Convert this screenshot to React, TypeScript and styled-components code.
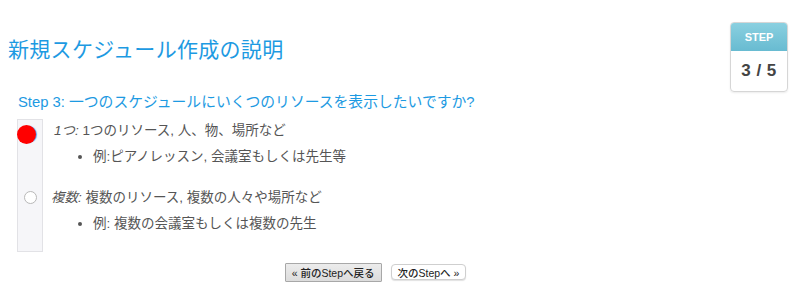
import React, {useState} from 'react';
import styled, {createGlobalStyle} from 'styled-components';

const GlobalStyle = createGlobalStyle`
  html, body {
    margin: 0;
    padding: 0;
    background: #ffffff;
  }
  body {
    font-family: "Liberation Sans", "Noto Sans CJK JP", sans-serif;
    color: #555555;
  }
`;

const Page = styled.div`
  width: 800px;
  height: 301px;
  box-sizing: border-box;
  padding: 22px 12px 0 8px;
`;

const Header = styled.div`
  display: flex;
  justify-content: space-between;
  align-items: flex-start;
`;

const Title = styled.h1`
  margin: 11px 0 0 0;
  font-size: 21px;
  font-weight: normal;
  color: #1d9ae2;
  letter-spacing: 0.3px;
`;

const StepBox = styled.div`
  width: 56px;
  height: 68px;
  border: 1px solid #d6d6d6;
  border-radius: 4px;
  overflow: hidden;
  display: flex;
  flex-direction: column;
  box-shadow: 0 1px 2px rgba(0, 0, 0, .08);
`;

const StepHead = styled.div`
  height: 28px;
  display: flex;
  align-items: center;
  justify-content: center;
  background: linear-gradient(#8ad0e0, #68bbd1);
  color: #ffffff;
  font-size: 11px;
  font-weight: bold;
`;

const StepCount = styled.div`
  flex: 1;
  display: flex;
  align-items: center;
  justify-content: center;
  color: #444444;
  font-size: 17px;
  font-weight: bold;
  letter-spacing: 0.5px;
`;

const Question = styled.h2`
  margin: -2px 0 0 10px;
  font-size: 14.8px;
  font-weight: normal;
  color: #1d9ae2;
`;

const Options = styled.div`
  display: flex;
  margin: 8px 0 0 9px;
`;

const RadioStrip = styled.div`
  width: 24px;
  height: 131px;
  background: #f6f6f9;
  border: 1px solid #e2e2e6;
  position: relative;
`;

type RadioPropsType = {
    $checked: boolean
    $top: number
}

const Radio = styled.span<RadioPropsType>`
  position: absolute;
  box-sizing: border-box;
  border-radius: 50%;
  cursor: pointer;
  ${props => props.$checked ? `
    left: -1px;
    top: ${props.$top}px;
    width: 19px;
    height: 19px;
    background: #ff0000;
    box-shadow: 2px 0 1px -1px #4aa0f5;
  ` : `
    left: 6px;
    top: ${props.$top}px;
    width: 13px;
    height: 13px;
    background: #ffffff;
    border: 1px solid #b8b8b8;
  `}
`;

const OptionList = styled.div`
  display: flex;
  flex-direction: column;
  margin-left: 8px;
`;

const Option = styled.div`
  margin-bottom: 20px;
`;

const OptionLabel = styled.div`
  font-size: 13.5px;
  line-height: 18px;
  color: #555555;
  margin-top: 3px;
`;

type KindPropsType = {
    $indent?: number
}

const Kind = styled.em<KindPropsType>`
  font-style: italic;
  margin-left: ${props => props.$indent || 0}px;
`;

const Bullets = styled.ul`
  margin: 8px 0 0 0;
  padding-left: 42px;
  font-size: 13.5px;
  line-height: 18px;
  color: #555555;
`;

const Footer = styled.div`
  display: flex;
  justify-content: center;
  gap: 9px;
  margin: 10px 45px 0 0;
`;

type ButtonPropsType = {
    $pressed?: boolean
}

const Button = styled.button<ButtonPropsType>`
  font-family: "Liberation Sans", "Noto Sans CJK JP", sans-serif;
  font-size: 10.5px;
  font-weight: 500;
  color: #222222;
  padding: 0 6px;
  height: ${props => props.$pressed ? '19px' : '16px'};
  margin-top: ${props => props.$pressed ? '0' : '1px'};
  background: ${props => props.$pressed ? 'linear-gradient(#ececec, #dcdcdc)' : '#ffffff'};
  border: 1px solid ${props => props.$pressed ? '#a8a8a8' : '#cfcfcf'};
  border-radius: ${props => props.$pressed ? '1px' : '4px'};
  box-shadow: ${props => props.$pressed ? 'none' : '0 1px 1px rgba(0, 0, 0, .12)'};
  cursor: pointer;
`;

const options = [
  {
    kind: '1つ:',
    label: ' 1つのリソース, 人、物、場所など',
    example: '例:ピアノレッスン, 会議室もしくは先生等',
    top: 5,
    indent: 3,
  },
  {
    kind: '複数:',
    label: ' 複数のリソース, 複数の人々や場所など',
    example: '例: 複数の会議室もしくは複数の先生',
    top: 71,
    indent: 0,
  },
];

export default function App() {
  const [selected, setSelected] = useState(0);

  return <>
    <GlobalStyle/>
    <Page>
      <Header>
        <Title>新規スケジュール作成の説明</Title>
        <StepBox>
          <StepHead>STEP</StepHead>
          <StepCount>3 / 5</StepCount>
        </StepBox>
      </Header>
      <Question>Step 3: 一つのスケジュールにいくつのリソースを表示したいですか?</Question>
      <Options>
        <RadioStrip>
          {options.map((option, i) =>
            <Radio key={option.kind} $checked={selected === i} $top={option.top} onClick={() => setSelected(i)}/>)}
        </RadioStrip>
        <OptionList>
          {options.map(option =>
            <Option key={option.kind}>
              <OptionLabel><Kind $indent={option.indent}>{option.kind}</Kind>{option.label}</OptionLabel>
              <Bullets><li>{option.example}</li></Bullets>
            </Option>)}
        </OptionList>
      </Options>
      <Footer>
        <Button $pressed>« 前のStepへ戻る</Button>
        <Button>次のStepへ »</Button>
      </Footer>
    </Page>
  </>;
}
